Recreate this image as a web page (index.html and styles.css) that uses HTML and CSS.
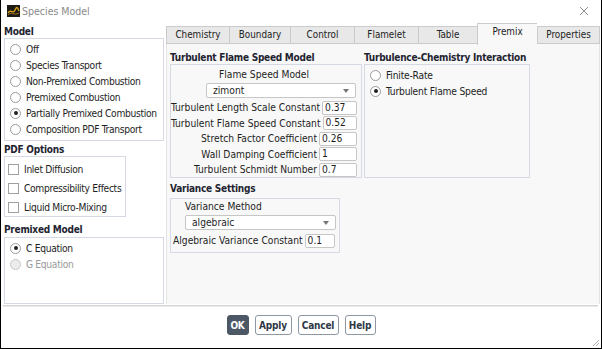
FILE: index.html
```html
<!DOCTYPE html>
<html>
<head>
<meta charset="utf-8">
<link rel="stylesheet" href="styles.css">
</head>
<body>
<div class="win">
  <div class="titlebar">
    <svg class="appicon" width="13" height="12" viewBox="0 0 13 12">
      <rect x="0" y="0" width="13" height="12" fill="#1d1a14"/>
      <path d="M1 8 C4 3, 6 10, 8 5 S11 4, 12 6" stroke="#d9a21b" stroke-width="1.4" fill="none"/>
      <path d="M1 10 C4 6, 7 11, 12 8" stroke="#a8741a" stroke-width="1" fill="none"/>
    </svg>
    <span class="title">Species Model</span>
    <svg class="close" width="10" height="10" viewBox="0 0 10 10">
      <path d="M1 1 L9 9 M9 1 L1 9" stroke="#8d8d8d" stroke-width="1"/>
    </svg>
  </div>
  <div class="main">
    <div class="left">
      <div class="hdr">Model</div>
      <div class="box model-box">
        <div class="opt"><span class="radio"></span>Off</div>
        <div class="opt"><span class="radio"></span>Species Transport</div>
        <div class="opt"><span class="radio"></span>Non-Premixed Combustion</div>
        <div class="opt"><span class="radio"></span>Premixed Combustion</div>
        <div class="opt"><span class="radio on"></span>Partially Premixed Combustion</div>
        <div class="opt"><span class="radio"></span>Composition PDF Transport</div>
      </div>
      <div class="hdr hdr-pdf">PDF Options</div>
      <div class="box pdf-box">
        <div class="opt chk-opt"><span class="check"></span>Inlet Diffusion</div>
        <div class="opt chk-opt"><span class="check"></span>Compressibility Effects</div>
        <div class="opt chk-opt"><span class="check"></span>Liquid Micro-Mixing</div>
      </div>
      <div class="hdr hdr-pre">Premixed Model</div>
      <div class="box pre-box">
        <div class="opt"><span class="radio on"></span>C Equation</div>
        <div class="opt disabled"><span class="radio dis"></span>G Equation</div>
      </div>
    </div>
    <div class="tabarea">
      <div class="tabs">
        <div class="tab w63">Chemistry</div>
        <div class="tab w61">Boundary</div>
        <div class="tab w64">Control</div>
        <div class="tab w64">Flamelet</div>
        <div class="tab w59">Table</div>
        <div class="tab w60 active">Premix</div>
        <div class="tab w63">Properties</div>
      </div>
      <div class="panel">
        <div class="col1">
          <div class="hdr">Turbulent Flame Speed Model</div>
          <div class="box tfs-box">
            <div class="center-label">Flame Speed Model</div>
            <div class="select tfs-select"><span>zimont</span><span class="caret"></span></div>
            <div class="frow"><span class="flabel">Turbulent Length Scale Constant</span><span class="input">0.37</span></div>
            <div class="frow"><span class="flabel">Turbulent Flame Speed Constant</span><span class="input">0.52</span></div>
            <div class="frow"><span class="flabel">Stretch Factor Coefficient</span><span class="input">0.26</span></div>
            <div class="frow"><span class="flabel">Wall Damping Coefficient</span><span class="input">1</span></div>
            <div class="frow"><span class="flabel">Turbulent Schmidt Number</span><span class="input">0.7</span></div>
          </div>
          <div class="hdr hdr-var">Variance Settings</div>
          <div class="box var-box">
            <div class="var-label">Variance Method</div>
            <div class="select var-select"><span>algebraic</span><span class="caret"></span></div>
            <div class="frow var-row"><span class="flabel">Algebraic Variance Constant</span><span class="input">0.1</span></div>
          </div>
        </div>
        <div class="col2">
          <div class="hdr">Turbulence-Chemistry Interaction</div>
          <div class="box tci-box">
            <div class="opt"><span class="radio"></span>Finite-Rate</div>
            <div class="opt"><span class="radio on"></span>Turbulent Flame Speed</div>
          </div>
        </div>
      </div>
    </div>
  </div>
  <div class="sep"></div>
  <div class="buttons">
    <button class="btn ok b-ok">OK</button>
    <button class="btn b-apply">Apply</button>
    <button class="btn b-cancel">Cancel</button>
    <button class="btn b-help">Help</button>
  </div>
  <svg class="grip" width="8" height="8" viewBox="0 0 8 8">
    <path d="M7 1 L1 7 M7 4 L4 7" stroke="#b0b0b0" stroke-width="1"/>
  </svg>
</div>
</body>
</html>
```

FILE: styles.css
```css
* { box-sizing: border-box; }
html, body { margin: 0; padding: 0; }
body {
  width: 602px;
  height: 349px;
  overflow: hidden;
  background: #fff;
  font-family: "DejaVu Sans Condensed", "DejaVu Sans", sans-serif;
  font-size: 10.2px;
  color: #1e1e1e;
}
.win {
  position: relative;
  width: 602px;
  height: 349px;
  border-left: 1px solid #000;
  border-right: 1px solid #000;
  border-bottom: 1px solid #000;
  display: flex;
  flex-direction: column;
}
.titlebar {
  height: 22px;
  display: flex;
  align-items: center;
  padding-left: 6px;
  padding-right: 12px;
}
.appicon { margin-right: 2px; }
.title { color: #8a8a8a; font-size: 10.5px; flex: 1; }
.main {
  height: 282px;
  display: flex;
  padding: 4px 0 0 3px;
  gap: 2px;
}
.left {
  width: 160px;
  display: flex;
  flex-direction: column;
}
.hdr {
  font-weight: bold;
  font-size: 10px;
  letter-spacing: -0.25px;
  height: 12px;
  line-height: 12px;
  color: #1e2430;
  white-space: nowrap;
}
.box {
  border: 1px solid #d5d9e3;
}
.left .box { background: #fff; }
.model-box { margin-top: 0; height: 103px; padding-top: 2px; padding-left: 5px; }
.hdr-pdf { margin-top: 3px; }
.pdf-box { width: 122px; height: 61px; padding-top: 3px; padding-left: 3px; }
.hdr-pre { margin-top: 6px; height: 14px; line-height: 14px; }
.pre-box { flex: 1; padding-top: 2px; padding-left: 5px; }
.opt {
  height: 16px;
  display: flex;
  align-items: center;
  white-space: nowrap;
  letter-spacing: -0.2px;
}
.left .opt { letter-spacing: -0.32px; }
.chk-opt { height: 19px; }
.radio {
  width: 11px;
  height: 11px;
  border-radius: 50%;
  border: 1px solid #9a9a9a;
  background: #fff;
  margin-right: 5px;
  position: relative;
  flex: none;
}
.radio.on::after {
  content: "";
  position: absolute;
  left: 2.5px;
  top: 2.5px;
  width: 4px;
  height: 4px;
  border-radius: 50%;
  background: #222;
}
.radio.dis { border-color: #c8c8c8; background: #ececec; }
.disabled { color: #9a9a9a; }
.check {
  width: 11px;
  height: 11px;
  border: 1px solid #a0a0a0;
  background: #fff;
  margin-right: 5px;
  flex: none;
}
.tabarea {
  width: 434px;
  display: flex;
  flex-direction: column;
}
.tabs {
  display: flex;
  height: 18px;
  align-items: flex-end;
}
.tab {
  height: 18px;
  line-height: 16px;
  text-align: center;
  background: #e8e8e8;
  border: 1px solid #cbcbcb;
  border-right: none;
  font-size: 9.8px;
  color: #222;
}
.tab:last-child { border-right: 1px solid #cbcbcb; }
.tab.active {
  height: 22px;
  margin-top: -4px;
  background: #f8f8f8;
  border-bottom: none;
  line-height: 16px;
  position: relative;
  top: 1px;
}
.w63 { width: 63px; } .w61 { width: 61px; } .w64 { width: 64px; }
.w59 { width: 59px; } .w60 { width: 60px; }
.panel {
  flex: 1;
  background: #f8f8f8;
  border-left: 1px solid #e4e4e4;
  border-right: 1px solid #e4e4e4;
  display: flex;
  gap: 2px;
  padding: 8px 0 0 3px;
}
.col1 { width: 192px; display: flex; flex-direction: column; }
.col2 { width: 166px; display: flex; flex-direction: column; }
.tfs-box { height: 114px; padding-top: 2px; }
.center-label { height: 16px; line-height: 16px; width: 150px; padding-left: 36px; text-align: center; }
.select {
  height: 15px;
  background: #fff;
  border: 1px solid #c6c6c6;
  border-radius: 2px;
  display: flex;
  align-items: center;
  justify-content: space-between;
  padding: 0 6px 0 6px;
}
.caret {
  width: 0; height: 0;
  border-left: 3.5px solid transparent;
  border-right: 3.5px solid transparent;
  border-top: 4px solid #777;
}
.tfs-select { margin-left: 35px; margin-right: 5px; margin-bottom: 2px; }
.frow {
  height: 15.5px;
  display: flex;
  align-items: center;
  justify-content: flex-end;
  padding-right: 4px;
  white-space: nowrap;
}
.flabel { margin-right: 2px; }
.input {
  width: 38px;
  height: 14px;
  line-height: 12px;
  background: #fff;
  border: 1px solid #c6c6c6;
  border-radius: 2px;
  padding-left: 2px;
}
.hdr-var { margin-top: 4px; height: 14px; line-height: 14px; }
.var-box { width: 170px; height: 55px; margin-top: 2px; }
.var-label { height: 16px; line-height: 16px; padding-left: 14px; }
.var-select { margin-left: 14px; margin-right: 3px; margin-bottom: 3px; }
.var-row { justify-content: flex-start; padding-left: 2px; }
.tci-box { height: 114px; padding-top: 2px; padding-left: 5px; }
.sep {
  height: 2px;
  margin: 1px 3px 0 2px;
  background: #d4d4d4;
  border-bottom: 1px solid #ececec;
}
.buttons {
  flex: 1;
  display: flex;
  justify-content: center;
  align-items: flex-start;
  gap: 6px;
  padding-top: 8px;
}
.btn {
  font-family: "DejaVu Sans Condensed", "DejaVu Sans", sans-serif;
  font-weight: bold;
  font-size: 10px;
  letter-spacing: -0.2px;
  height: 20px;
  padding: 0;
  background: #fff;
  border: 1px solid #8e97a3;
  border-radius: 3px;
  color: #2f3947;
}
.b-ok { width: 22px; }
.b-apply { width: 37px; }
.b-cancel { width: 41px; }
.b-help { width: 31px; }
.btn.ok { background: #4d5866; color: #fff; border-color: #4d5866; }
.grip { position: absolute; right: 1px; bottom: 1px; }
```
